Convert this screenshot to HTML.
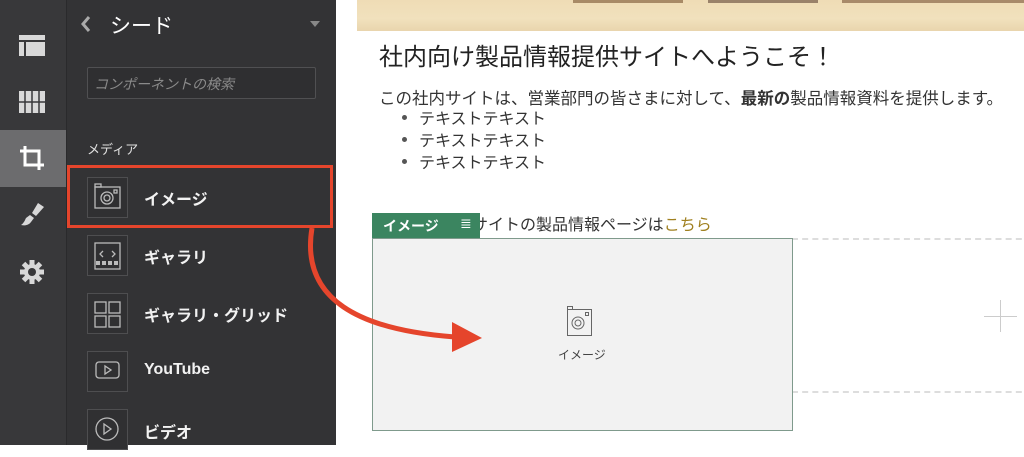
<!DOCTYPE html>
<html><head><meta charset="utf-8"><style>
*{margin:0;padding:0;box-sizing:border-box}
body{width:1024px;height:445px;overflow:hidden;position:relative;background:#fff;font-family:"Liberation Sans","Noto Sans CJK JP",sans-serif}
.abs{position:absolute}
#bar{left:0;top:0;width:66px;height:445px;background:#38383a}
#panel{left:66px;top:0;width:270px;height:445px;background:#333335;border-left:1px solid #2a2a2c}
.ib{left:87px;width:41px;height:41px;border:1px solid #4e4e50;background:#303032}
.lbl{left:144px;color:#f2f2f2;font-size:16px;font-weight:bold}
.li{left:419px;font-size:16px;color:#333}
.li:before{content:"";position:absolute;left:-17px;top:10px;width:5px;height:5px;border-radius:50%;background:#555}
</style></head><body>
<div id="bar" class="abs"></div>
<div class="abs" style="left:0;top:130px;width:66px;height:57px;background:#6c6c6e"></div>
<svg class="abs" style="left:0;top:0" width="66" height="300">
 <g fill="#d8d8d8">
  <rect x="19" y="35" width="26" height="5"/><rect x="19" y="42" width="5" height="14"/><rect x="26" y="42" width="19" height="14"/>
  <rect x="19" y="91" width="26" height="22"/>
 </g>
 <g stroke="#38383a" stroke-width="1.5"><line x1="25" y1="91" x2="25" y2="113"/><line x1="32" y1="91" x2="32" y2="113"/><line x1="39" y1="91" x2="39" y2="113"/><line x1="19" y1="102" x2="45" y2="102"/></g>
 <g fill="none" stroke="#fff" stroke-width="3"><path d="M25 146V165H44M20 151H39V170"/></g>
 <path d="M38 203l6 4-8 9-4-3zM30 215l4 3-3 4c-2 3-6 4-10 3 3-2 4-5 5-7z" fill="#d8d8d8"/>
 <g transform="translate(32,272)" fill="#d8d8d8"><circle r="8"/><g><rect x="-2.5" y="-12" width="5" height="24"/><rect x="-2.5" y="-12" width="5" height="24" transform="rotate(45)"/><rect x="-2.5" y="-12" width="5" height="24" transform="rotate(90)"/><rect x="-2.5" y="-12" width="5" height="24" transform="rotate(135)"/></g><circle r="4" fill="#38383a"/></g>
</svg>
<div id="panel" class="abs"></div>
<svg class="abs" style="left:78px;top:14px" width="16" height="20"><path d="M11 3L5 10l6 7" fill="none" stroke="#aaa" stroke-width="3"/></svg>
<div class="abs" style="left:110px;top:10px;color:#fff;font-size:21px">シード</div>
<div class="abs" style="left:310px;top:21px;width:0;height:0;border-left:5px solid transparent;border-right:5px solid transparent;border-top:6px solid #888"></div>
<div class="abs" style="left:87px;top:67px;width:229px;height:32px;border:1px solid #505052;border-radius:2px;background:#2f2f31;color:#8a8a8a;font-size:14px;font-style:italic;padding:6px 0 0 6px">コンポーネントの検索</div>
<div class="abs" style="left:87px;top:139px;color:#e0e0e0;font-size:13px">メディア</div>
<div class="abs" style="left:67px;top:165px;width:266px;height:63px;border:3px solid #e5452c"></div>
<div class="abs ib" style="top:177px"></div>
<div class="abs ib" style="top:235px"></div>
<div class="abs ib" style="top:293px"></div>
<div class="abs ib" style="top:351px"></div>
<div class="abs ib" style="top:409px"></div>
<svg class="abs" style="left:87px;top:177px" width="41" height="280" fill="none" stroke="#bbb" stroke-width="1.3">
 <rect x="8" y="10" width="25" height="21"/><rect x="8" y="7" width="6" height="3"/><circle cx="20" cy="21" r="6"/><circle cx="20" cy="21" r="3"/><rect x="27" y="13" width="3" height="3"/>
 <rect x="8" y="66" width="25" height="26"/><path d="M16 74l-3 3 3 3M25 74l3 3-3 3"/><path d="M9 86h23" stroke-width="4" stroke-dasharray="4 2"/>
 <rect x="8" y="125" width="11" height="11"/><rect x="22" y="125" width="11" height="11"/><rect x="8" y="139" width="11" height="11"/><rect x="22" y="139" width="11" height="11"/>
 <rect x="9" y="185" width="23" height="16" rx="3"/><path d="M18 189v8l6-4z"/>
 <circle cx="20" cy="252" r="11"/><path d="M17 247v10l7-5z"/>
</svg>
<div class="abs lbl" style="top:186px">イメージ</div>
<div class="abs lbl" style="top:244px">ギャラリ</div>
<div class="abs lbl" style="top:302px">ギャラリ・グリッド</div>
<div class="abs lbl" style="top:361px">YouTube</div>
<div class="abs lbl" style="top:419px">ビデオ</div>
<div class="abs" style="left:357px;top:0;width:667px;height:31px;background:linear-gradient(180deg,#efdcb5,#f1e1bd 60%,#e9d5ad)"></div>
<div class="abs" style="left:573px;top:0;width:110px;height:3px;background:#a88a66"></div>
<div class="abs" style="left:708px;top:0;width:110px;height:3px;background:#9a826a"></div>
<div class="abs" style="left:842px;top:0;width:182px;height:3px;background:#a88a6a"></div>
<div class="abs" style="left:379px;top:37px;font-size:24px;color:#222">社内向け製品情報提供サイトへようこそ！</div>
<div class="abs" style="left:379px;top:85px;font-size:16.5px;color:#333;white-space:nowrap">この社内サイトは、営業部門の皆さまに対して、<b>最新の</b>製品情報資料を提供します。</div>
<div class="abs li" style="top:105px">テキストテキスト</div>
<div class="abs li" style="top:127px">テキストテキスト</div>
<div class="abs li" style="top:149px">テキストテキスト</div>
<div class="abs" style="left:472px;top:211px;font-size:16px;color:#333">サイトの製品情報ページは<span style="color:#a08020">こちら</span></div>
<div class="abs" style="left:792px;top:238px;width:240px;height:155px;border-top:2px dashed #ddd;border-bottom:2px dashed #ddd"></div>
<div class="abs" style="left:1000px;top:300px;width:1px;height:32px;background:#ccc"></div>
<div class="abs" style="left:984px;top:316px;width:33px;height:1px;background:#ccc"></div>
<div class="abs" style="left:372px;top:238px;width:421px;height:193px;background:#f2f2f2;border:1px solid #7f9a8c"></div>
<div class="abs" style="left:372px;top:213px;width:108px;height:25px;background:#3b8560;color:#fff;font-size:14px;font-weight:bold;padding:3px 0 0 11px">イメージ<span style="position:absolute;left:88px;top:2px;font-weight:normal">≣</span></div>
<svg class="abs" style="left:560px;top:302px" width="50" height="36" fill="none" stroke="#666" stroke-width="1">
 <rect x="7.5" y="7.5" width="24" height="26"/><rect x="7.5" y="4.5" width="5" height="3"/><circle cx="18" cy="21" r="6"/><circle cx="18" cy="21" r="3"/><rect x="25.5" y="10.5" width="3" height="3"/>
</svg>
<div class="abs" style="left:558px;top:346px;font-size:12px;color:#444">イメージ</div>
<svg class="abs" style="left:0;top:0" width="1024" height="445">
 <path d="M312 228C300 300 360 330 455 337" fill="none" stroke="#e5452c" stroke-width="5"/>
 <path d="M452 322L482 338L452 352z" fill="#e5452c"/>
</svg>
</body></html>
